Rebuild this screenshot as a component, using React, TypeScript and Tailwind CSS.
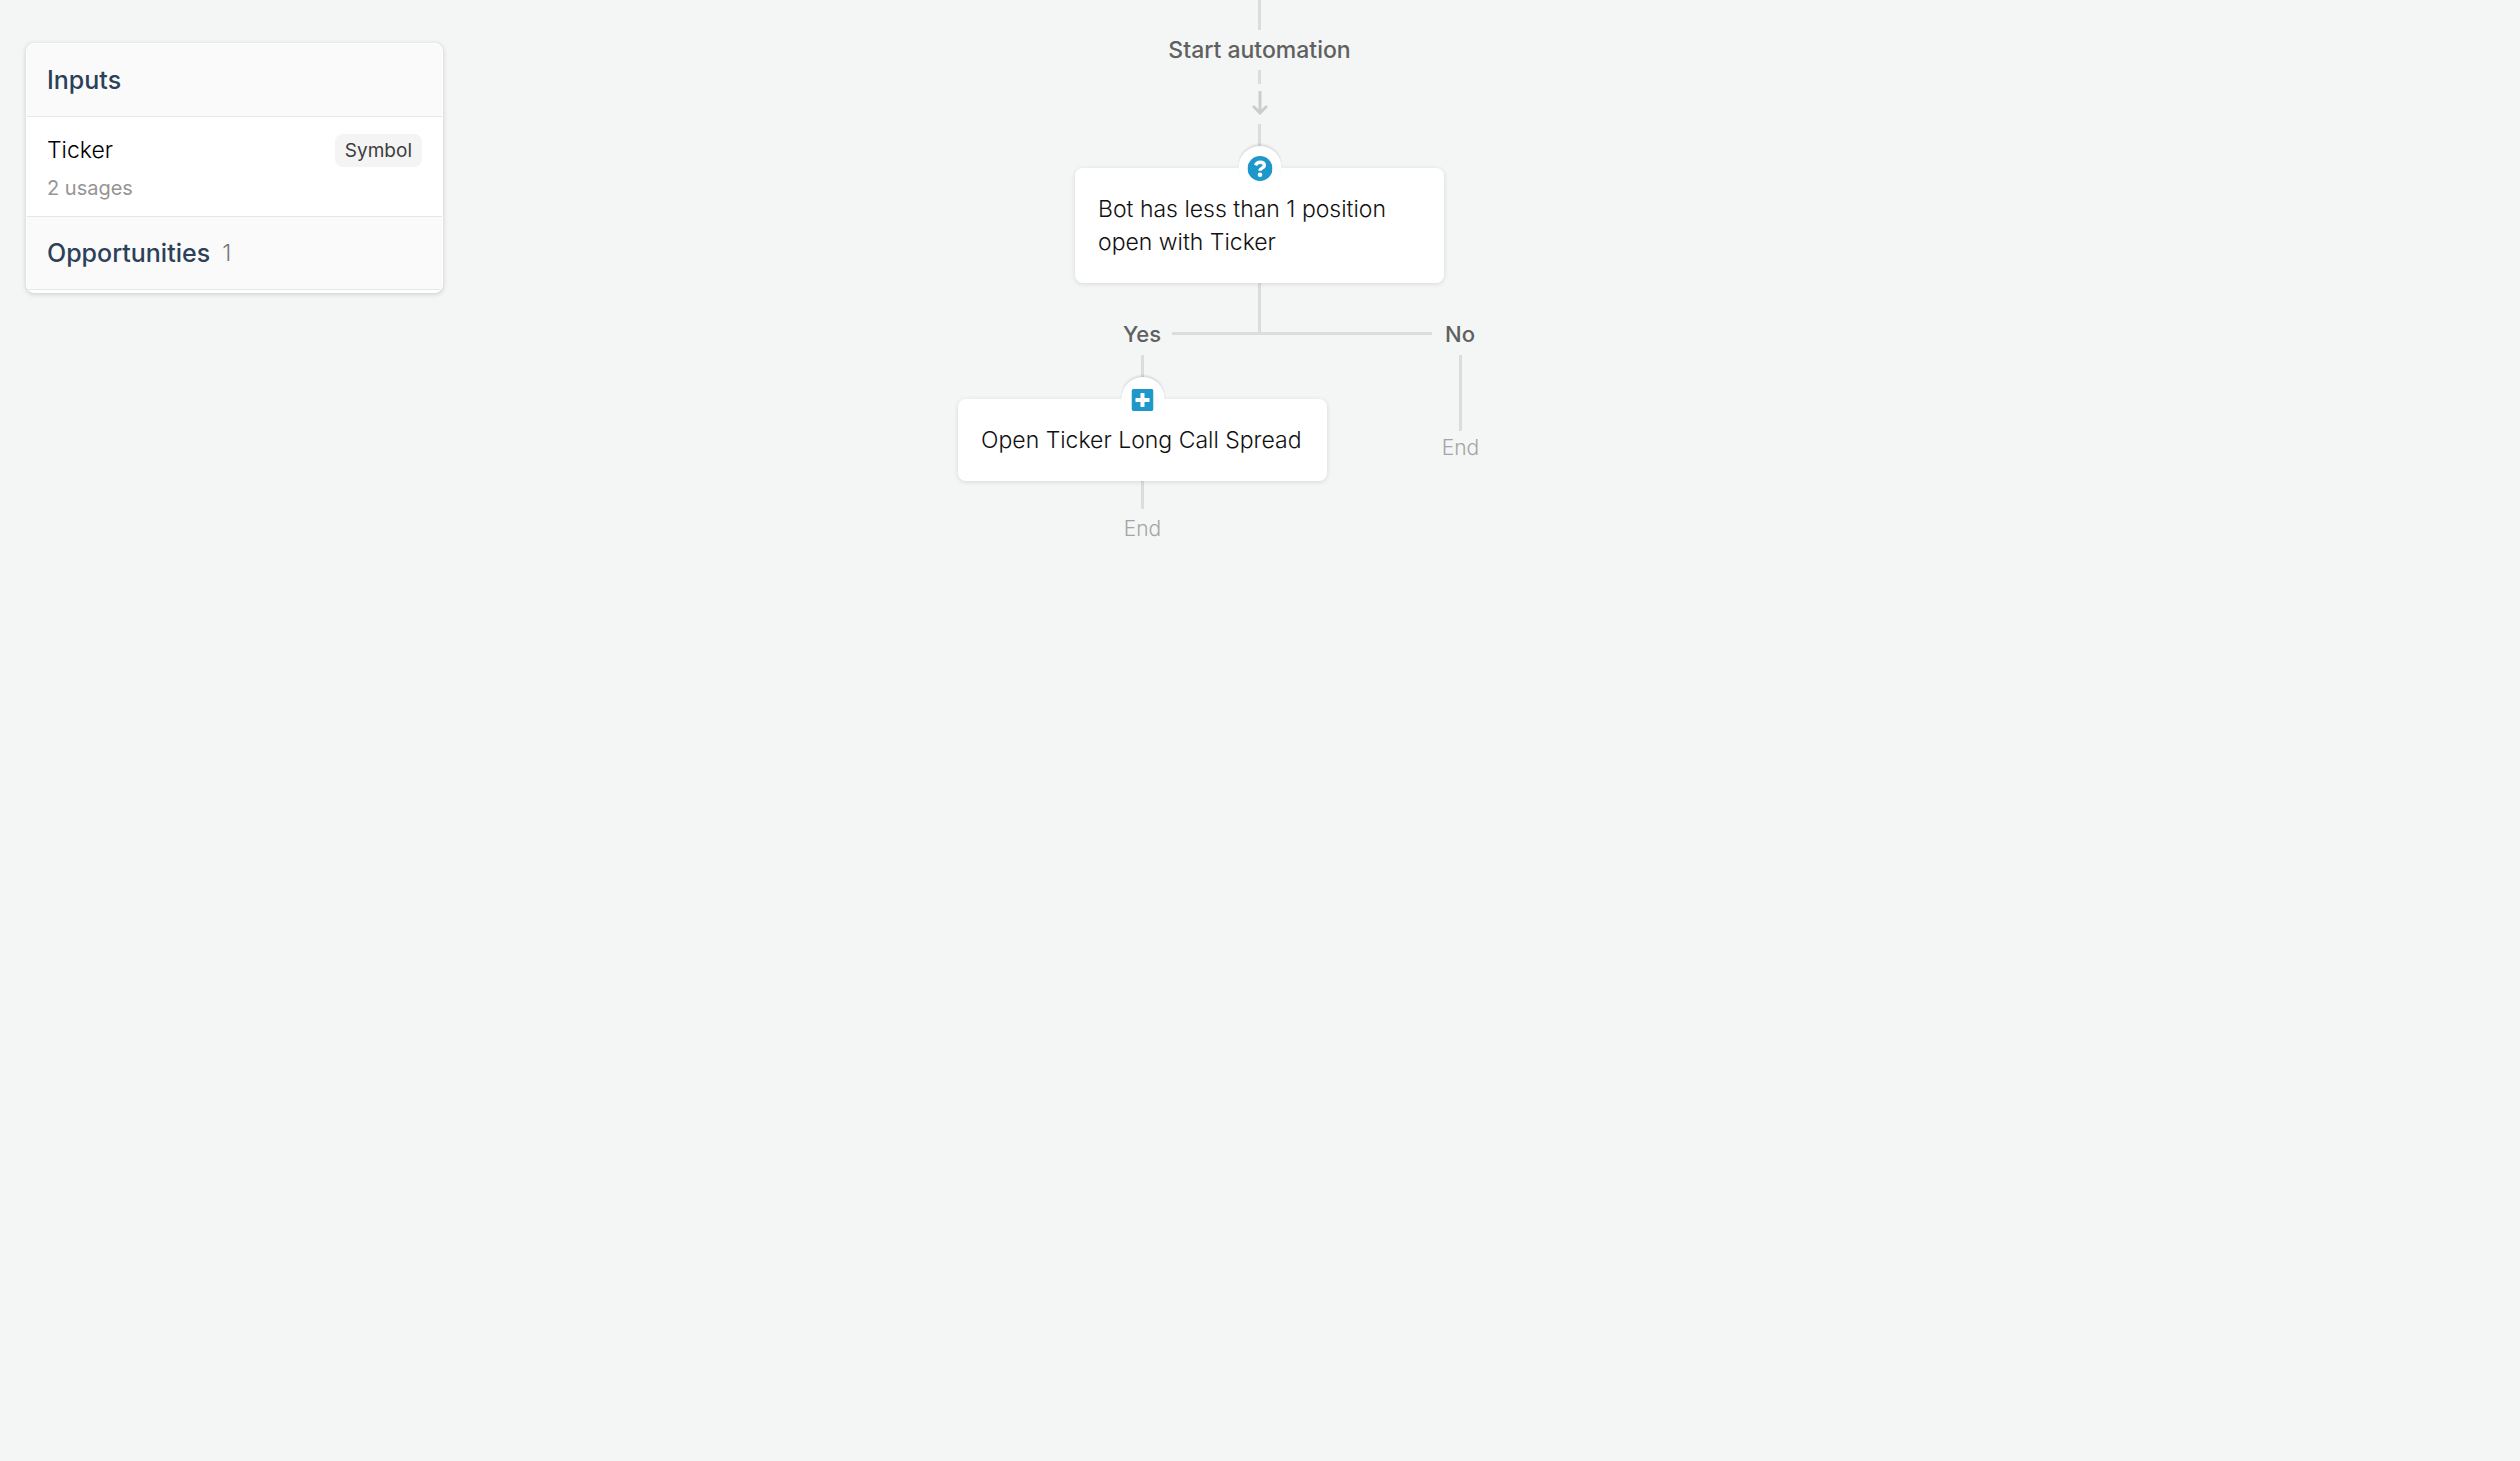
import type { ReactNode } from "react";

type NodeCardProps = {
  icon: ReactNode;
  children: ReactNode;
};

function QuestionIcon() {
  return (
    <svg viewBox="0 0 25 25" className="h-[25px] w-[25px]" aria-hidden="true">
      <circle cx="12.5" cy="12.5" r="12.5" fill="#1e98ca" />
      <path
        d="M8 9.2C9 7.3 10.4 6.3 12.5 6.3c2.5 0 4.3 1.2 4.3 3.1 0 2.6-4.2 2.5-4.2 5.4"
        fill="none"
        stroke="#fff"
        strokeWidth="3.4"
      />
      <circle cx="12.5" cy="18.7" r="2.3" fill="#fff" />
    </svg>
  );
}

function PlusIcon() {
  return (
    <svg viewBox="0 0 22 22" className="h-[22px] w-[22px]" aria-hidden="true">
      <rect width="22" height="22" rx="2" fill="#1e98ca" />
      <path d="M11 4v14M4 11h14" fill="none" stroke="#fff" strokeWidth="4" />
    </svg>
  );
}

function ArrowDown() {
  return (
    <svg viewBox="0 0 16 24" className="h-6 w-4" aria-hidden="true">
      <path d="M8 0v22M1 15l7 7 7-7" fill="none" stroke="#cccccc" strokeWidth="3" />
    </svg>
  );
}

function NodeCard({ icon, children }: NodeCardProps) {
  return (
    <button
      type="button"
      className="relative w-[369px] rounded-lg bg-white pt-[25px] pr-4 pb-6 pl-[23px] text-left text-[23px] leading-[33px] font-light text-[#111111] shadow-[0_1px_5px_rgba(0,0,0,0.12)]"
    >
      <span className="absolute -top-[22px] left-1/2 flex h-[43px] w-[43px] -translate-x-1/2 items-center justify-center rounded-full bg-white pt-0.5 shadow-[0_-2px_2px_rgba(0,0,0,0.1)]">
        {icon}
      </span>
      {children}
    </button>
  );
}

function InputsPanel() {
  return (
    <aside className="mt-[43px] ml-[26px] w-[417px] self-start overflow-hidden rounded-lg border border-white bg-white pb-0.5 shadow-[0_1px_5px_rgba(0,0,0,0.18)]">
      <h2 className="border-b border-[#e6e6e6] bg-[#fafafa] px-5 py-5 text-[25px] leading-8 font-medium text-[#2c4159]">
        Inputs
      </h2>
      <div className="flex items-start justify-between border-b border-[#e6e6e6] px-5 pt-[17px] pb-3">
        <div>
          <div className="text-[23px] leading-8 font-light text-black">Ticker</div>
          <div className="pt-1.5 text-[20px] leading-8 text-[#959595]">2 usages</div>
        </div>
        <span className="rounded-lg bg-[#f4f4f4] px-2.5 text-[19px] leading-[33px] text-[#3c3c3c]">
          Symbol
        </span>
      </div>
      <h2 className="flex gap-3 border-b border-[#e6e6e6] bg-[#fafafa] px-5 py-5 text-[25px] leading-8 font-medium text-[#2c4159]">
        Opportunities
        <span className="text-[23px] font-light text-[#777777]">1</span>
      </h2>
    </aside>
  );
}

function Flow() {
  return (
    <main className="flex w-[603px] flex-col items-center">
      <div className="h-[30px] w-[3px] bg-[#dcdcdc]" />
      <div className="text-[23px] leading-10 font-medium text-[#606060]">Start automation</div>
      <div className="h-3.5 w-[3px] bg-[#dcdcdc]" />
      <div className="h-10 pt-[7px]">
        <ArrowDown />
      </div>
      <div className="h-11 w-[3px] bg-[#dcdcdc]" />
      <NodeCard icon={<QuestionIcon />}>Bot has less than 1 position open with Ticker</NodeCard>
      <div className="h-[49px] w-[3px] bg-[#dcdcdc]" />

      <div className="-mt-5 flex h-[43px] w-full items-center pr-[73px] pl-[154px] text-[22px] font-medium text-[#606060]">
        <span className="w-[60px] pt-0.5 text-center">Yes</span>
        <div className="h-[3px] flex-1 bg-[#dcdcdc]" />
        <span className="w-14 pt-0.5 text-center">No</span>
      </div>

      <div className="flex w-full justify-between text-[21px] font-light text-[#a4a4a4]">
        <div className="flex flex-col items-center">
          <div className="h-11 w-[3px] bg-[#dcdcdc]" />
          <NodeCard icon={<PlusIcon />}>Open Ticker Long Call Spread</NodeCard>
          <div className="h-7 w-[3px] bg-[#dcdcdc]" />
          <div className="leading-10">End</div>
        </div>
        <div className="flex w-[201px] flex-col items-center">
          <div className="h-[76px] w-[3px] bg-[#dcdcdc]" />
          <div className="leading-[34px]">End</div>
        </div>
      </div>
    </main>
  );
}

export default function App() {
  return (
    <div className="grid min-h-screen grid-cols-[1fr_auto_1fr] bg-[#f4f6f5] pr-px font-['Inter',sans-serif]">
      <InputsPanel />
      <Flow />
    </div>
  );
}
